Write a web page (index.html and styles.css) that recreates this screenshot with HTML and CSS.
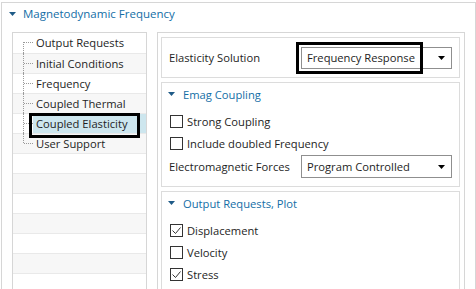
FILE: index.html
```html
<!DOCTYPE html>
<html lang="en">
<head>
    <meta charset="UTF-8">
    <title>Magnetodynamic Frequency</title>
    <link rel="stylesheet" href="styles.css">
</head>
<body>
    <div class="frame">
        <!-- Cabecalho -->
        <div class="frame-head">
            <svg class="caret" width="7" height="4" viewBox="0 0 7 4"><path d="M0 0h7L3.5 4z"/></svg>
            <span>Magnetodynamic Frequency</span>
        </div>

        <div class="frame-body">
            <!-- Arvore -->
            <ul class="tree">
                <li class="node first"><span class="branch"></span><span class="item">Output Requests</span></li>
                <li class="node"><span class="branch"></span><span class="item">Initial Conditions</span></li>
                <li class="node"><span class="branch"></span><span class="item">Frequency</span></li>
                <li class="node"><span class="branch"></span><span class="item">Coupled Thermal</span></li>
                <li class="node selected"><span class="branch"></span><span class="item">Coupled Elasticity</span></li>
                <li class="node last"><span class="branch"></span><span class="item">User Support</span></li>
                <li></li>
                <li></li>
                <li></li>
                <li></li>
                <li></li>
                <li></li>
                <li></li>
                <li></li>
            </ul>

            <!-- Propriedades -->
            <div class="props">
                <div class="group solution">
                    <span class="label">Elasticity Solution</span>
                    <div class="select focus">
                        <span>Frequency Response</span>
                        <svg class="arrow" width="7" height="4" viewBox="0 0 7 4"><path d="M0 0h7L3.5 4z"/></svg>
                    </div>
                </div>

                <div class="group">
                    <div class="group-head">
                        <svg class="caret" width="7" height="4" viewBox="0 0 7 4"><path d="M0 0h7L3.5 4z"/></svg>
                        <span>Emag Coupling</span>
                    </div>
                    <div class="check"><span class="box"></span>Strong Coupling</div>
                    <div class="check"><span class="box"></span>Include doubled Frequency</div>
                    <div class="field">
                        <span class="label">Electromagnetic Forces</span>
                        <div class="select">
                            <span>Program Controlled</span>
                            <svg class="arrow" width="7" height="4" viewBox="0 0 7 4"><path d="M0 0h7L3.5 4z"/></svg>
                        </div>
                    </div>
                </div>

                <div class="group">
                    <div class="group-head">
                        <svg class="caret" width="7" height="4" viewBox="0 0 7 4"><path d="M0 0h7L3.5 4z"/></svg>
                        <span>Output Requests, Plot</span>
                    </div>
                    <div class="check"><span class="box checked"><svg width="11" height="11" viewBox="0 0 11 11"><path d="M1.5 5.5l3 3 5-6"/></svg></span>Displacement</div>
                    <div class="check"><span class="box"></span>Velocity</div>
                    <div class="check"><span class="box checked"><svg width="11" height="11" viewBox="0 0 11 11"><path d="M1.5 5.5l3 3 5-6"/></svg></span>Stress</div>
                </div>
            </div>
        </div>
    </div>
</body>
</html>
```

FILE: styles.css
```css
/* Geral */
*, *::before, *::after {
    margin: 0;
    padding: 0;
    box-sizing: border-box;
}

html, body {
    height: 289px;
    overflow: hidden;
}

body {
    background: #fff;
    font-family: 'Open Sans', sans-serif;
    font-size: 11.2px;
    color: #1e1e1e;
}

/* Moldura */
.frame {
    margin: 2px 0 0 1px;
    width: 475px;
    height: 300px;
    border: 1px solid #d6d6d6;
    border-bottom: none;
}

.frame-head {
    display: flex;
    align-items: center;
    gap: 7px;
    height: 21px;
    padding-left: 7px;
    color: #136ea6;
    font-size: 11.5px;
}

.caret path {
    fill: #1f5b87;
}

.frame-body {
    display: flex;
    gap: 10px;
    padding: 8px 10px 0;
}

/* Arvore */
.tree {
    list-style: none;
    width: 135px;
    height: 270px;
    border: 1px solid #d6d6d6;
    border-bottom: none;
    overflow: hidden;
}

.tree li {
    display: flex;
    height: 20px;
    border-top: 1px solid #e9e9e9;
}

.tree li:first-child {
    border-top: none;
}

.tree li:nth-child(even) {
    background: #f7f7f7;
}

.branch {
    position: relative;
    width: 20px;
    flex-shrink: 0;
}

.branch::before {
    content: '';
    position: absolute;
    left: 10px;
    top: -1px;
    bottom: 0;
    border-left: 1px dotted #9a9a9a;
}

.node.first .branch::before {
    top: 9px;
}

.node.last .branch::before {
    bottom: 10px;
}

.branch::after {
    content: '';
    position: absolute;
    left: 11px;
    right: 0;
    top: 9px;
    border-top: 1px dotted #9a9a9a;
}

.item {
    flex: 1;
    position: relative;
    padding-left: 3px;
    line-height: 19px;
    white-space: nowrap;
}

.node.selected {
    background: #fff;
}

.node.selected .item {
    background: #cde6ee;
}

/* contorno de destaque */
.node.selected .item::after {
    content: '';
    position: absolute;
    left: -4px;
    top: -1px;
    width: 111px;
    height: 25px;
    border: 3px solid #000;
    z-index: 2;
}

/* Painel de propriedades */
.props {
    width: 308px;
    height: 270px;
    border: 1px solid #d6d6d6;
    border-bottom: none;
    padding: 4px 4px 0 3px;
    display: flex;
    flex-direction: column;
    gap: 4px;
}

.group {
    border: 1px solid #dcdcdc;
    padding-bottom: 8px;
}

.group.solution {
    display: flex;
    align-items: center;
    height: 41px;
    padding: 0 7px;
}

.group-head {
    display: flex;
    align-items: center;
    gap: 8px;
    height: 22px;
    padding-left: 6px;
    margin-bottom: 5px;
    color: #136ea6;
}

.label {
    white-space: nowrap;
}

.select {
    position: relative;
    display: flex;
    align-items: center;
    justify-content: space-between;
    margin-left: auto;
    width: 151px;
    height: 22px;
    padding: 0 6px 0 5px;
    border: 1px solid #8f8f8f;
    background: #fff;
}

.arrow path {
    fill: #000;
}

.select.focus::after {
    content: '';
    position: absolute;
    left: -6px;
    top: -6px;
    width: 127px;
    height: 32px;
    border: 3px solid #000;
}

.check {
    display: flex;
    align-items: center;
    height: 22px;
    padding-left: 8px;
}

.box {
    display: flex;
    align-items: center;
    justify-content: center;
    width: 13px;
    height: 13px;
    margin-right: 4px;
    border: 1px solid #333;
    background: #fff;
}

.box path {
    fill: none;
    stroke: #333;
    stroke-width: 1;
}

.field {
    display: flex;
    align-items: center;
    margin-top: 1px;
    padding: 0 7px;
    height: 23px;
}

.field .select {
    height: 23px;
}
```
